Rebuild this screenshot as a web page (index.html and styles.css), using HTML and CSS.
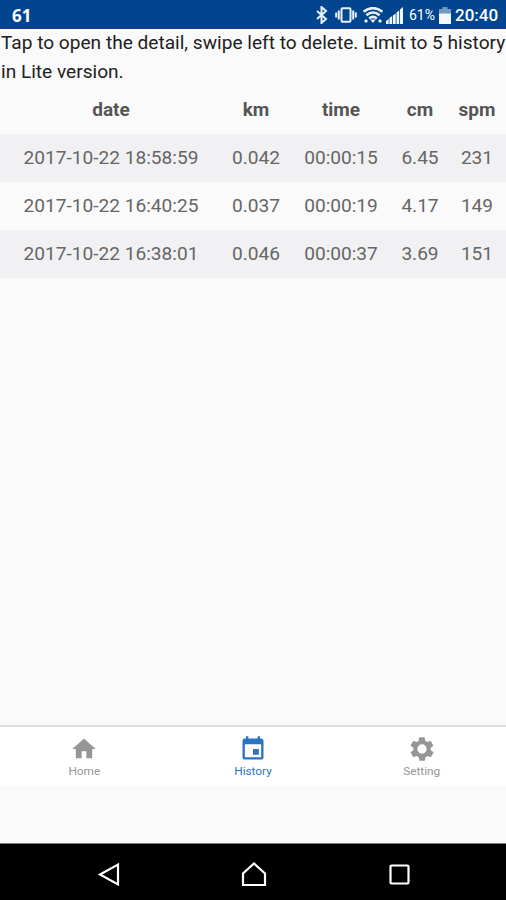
FILE: index.html
```html
<!DOCTYPE html>
<html lang="en">
    <head>
        <title>History</title>
        <meta charset="UTF-8" />
        <meta name="viewport" content="width=device-width, initial-scale=1" />
        <link rel="stylesheet" href="styles.css">
    </head>
    <body>
        <header class="status">
            <span class="notice">61</span>
            <div class="status-icons">
                <svg class="bluetooth" width="12" height="18" viewBox="0 0 12 18">
                    <path d="M1 5l9 8-4.5 4V1L10 5l-9 8" />
                </svg>
                <svg class="vibrate" width="22" height="16" viewBox="0 0 22 16">
                    <rect x="6.5" y="1.2" width="9" height="13.6" rx="1" />
                    <path d="M3.8 3.5v9M18.2 3.5v9M1.2 5.5v5M20.8 5.5v5" />
                </svg>
                <svg class="wifi" width="20" height="17" viewBox="0 0 20 17">
                    <path d="M.6 4.7Q10-2.4 19.4 4.7M3.4 8.2q6.6-5.4 13.2 0M6.2 11.4q3.800-3 7.600 0" />
                    <path class="solid" d="M7.2 12.5h5.600L10 16zM1 14l2-2 2 2-2 2zM15 14l2-2 2 2-2 2z" />
                </svg>
                <svg class="signal" width="17" height="17" viewBox="0 0 17 17">
                    <path class="solid" d="M0 17v-3l2.7-2v5zM3.4 17v-6l2.8-2v8zM7 17V8.5l2.7-2V17zM10.5 17V5.500l2.700-2V17zM14 17V2.400L17 0v17z" />
                </svg>
                <span class="percent">61%</span>
                <svg class="battery" width="12" height="17" viewBox="0 0 12 17">
                    <path class="drained" d="M3.5 0h5v2H12v5H0V2h3.5z" />
                    <path class="solid" d="M0 6.5h12V17H0z" />
                </svg>
                <span class="clock">20:40</span>
            </div>
        </header>
        <main class="content">
            <p class="hint">Tap to open the detail, swipe left to delete. Limit to 5 history<br>in Lite version.</p>
            <table class="history">
                <colgroup>
                    <col class="col-date">
                    <col class="col-km">
                    <col class="col-time">
                    <col class="col-cm">
                    <col class="col-spm">
                </colgroup>
                <thead>
                    <tr><th>date</th><th>km</th><th>time</th><th>cm</th><th>spm</th></tr>
                </thead>
                <tbody>
                    <tr><td>2017-10-22 18:58:59</td><td>0.042</td><td>00:00:15</td><td>6.45</td><td>231</td></tr>
                    <tr><td>2017-10-22 16:40:25</td><td>0.037</td><td>00:00:19</td><td>4.17</td><td>149</td></tr>
                    <tr><td>2017-10-22 16:38:01</td><td>0.046</td><td>00:00:37</td><td>3.69</td><td>151</td></tr>
                </tbody>
            </table>
        </main>
        <nav class="tabs">
            <a class="tab">
                <svg width="28" height="28" viewBox="0 0 24 24">
                    <path d="M10 20v-6h4v6h5v-8h3L12 3 2 12h3v8z" />
                </svg>
                <span>Home</span>
            </a>
            <a class="tab active">
                <svg width="28" height="28" viewBox="0 0 24 24">
                    <path d="M17 12h-5v5h5v-5zM16 1v2H8V1H6v2H5c-1.1 0-2 .9-2 2v14c0 1.1.9 2 2 2h14c1.1 0 2-.9 2-2V5c0-1.1-.9-2-2-2h-1V1h-2zm3 18H5V8h14v11z" />
                </svg>
                <span>History</span>
            </a>
            <a class="tab">
                <svg width="28" height="28" viewBox="0 0 24 24">
                    <path d="M19.4 13c0-.3.1-.6.1-1s0-.7-.1-1l2.1-1.6c.2-.2.2-.4.1-.6l-2-3.5c-.1-.2-.4-.3-.6-.2l-2.5 1c-.5-.4-1.1-.7-1.7-1l-.4-2.6c0-.3-.2-.5-.4-.5h-4c-.2 0-.4.2-.5.4l-.4 2.7c-.6.2-1.1.6-1.7 1l-2.5-1c-.2-.1-.4 0-.6.2l-2 3.500c-.1.2 0 .5.1.6L4.600 11c0 .3-.1.6-.1 1s0 .7.1 1l-2.1 1.6c-.2.2-.3.4-.1.6l2 3.500c.1.2.4.3.6.2l2.500-1c.5.4 1.1.7 1.7 1l.4 2.600c.1.3.3.5.5.5h4c.2 0 .5-.2.5-.4l.4-2.700c.6-.2 1.1-.6 1.7-1l2.500 1c.2.1.5 0 .6-.2l2-3.500c.1-.2.1-.5-.1-.6zM12 16a4 4 0 1 1 0-8 4 4 0 0 1 0 8z" />
                </svg>
                <span>Setting</span>
            </a>
        </nav>
        <footer class="navbar">
            <svg width="24" height="26" viewBox="0 0 24 26">
                <path d="M21 2.500v20L3 12.500z" />
            </svg>
            <svg width="26" height="26" viewBox="0 0 26 26">
                <path d="M13 1.500l11 10V23H2V11.500z" />
            </svg>
            <svg width="24" height="26" viewBox="0 0 24 26">
                <rect x="3.500" y="3.500" width="18" height="18" rx="1" />
            </svg>
        </footer>
    </body>
</html>
```

FILE: styles.css
```css
* {
    box-sizing: border-box;
}
body {
    display: flex;
    flex-direction: column;
    height: 100vh;
    margin: 0;
    overflow: hidden;
    background-color: #fafafa;
    font-family: Roboto, "Liberation Sans", sans-serif;
}
.status {
    display: flex;
    align-items: center;
    justify-content: space-between;
    height: 29px;
    padding: 2px 8px 0 12px;
    background-color: #01458f;
    border-bottom: 1px solid #1a2f97;
    color: #fff;
}
.notice {
    font-family: "Noto Sans", sans-serif;
    font-size: 17px;
    font-weight: 700;
}
.status-icons {
    display: flex;
    align-items: center;
}
.status svg {
    fill: none;
    stroke: #e8f1fb;
    stroke-width: 2;
}
.status .wifi {
    margin-left: 6px;
    stroke-width: 2.6;
}
.status .solid {
    fill: #f2f7fd;
    stroke: none;
}
.status .drained {
    fill: #6f9ac4;
    stroke: none;
}
.vibrate {
    margin-left: 7px;
}
.signal {
    margin-left: 3px;
}
.percent {
    width: 27px;
    margin-left: 6px;
    font-size: 14px;
}
.battery {
    margin-left: 3px;
}
.clock {
    width: 43px;
    margin-left: 4px;
    font-size: 17px;
    font-weight: 500;
}
.content {
    flex: 1;
}
.hint {
    margin: 0;
    padding-left: 1px;
    color: #212121;
    font-size: 19.1px;
    line-height: 28.5px;
    white-space: nowrap;
}
.history {
    width: 506px;
    border-collapse: collapse;
    table-layout: fixed;
    color: #666;
    font-size: 19.1px;
    text-align: center;
}
.history th,
.history td {
    height: 48px;
    padding: 0 0 2px;
    white-space: nowrap;
}
.history th {
    color: #555;
    font-size: 19px;
    font-weight: 700;
}
.history tbody tr:nth-child(odd) {
    background-color: #f1f1f3;
}
.col-date {
    width: 222px;
}
.col-km {
    width: 68px;
}
.col-time {
    width: 102px;
}
.col-cm {
    width: 56px;
}
.col-spm {
    width: 58px;
}
.tabs {
    display: flex;
    height: 60px;
    margin-bottom: 58px;
    background-color: #fff;
    border-top: 2px solid #dedede;
}
.tab {
    display: flex;
    flex: 1;
    flex-direction: column;
    align-items: center;
    padding-top: 8px;
    color: #969696;
    font-size: 11.8px;
    line-height: 16px;
}
.tab svg {
    fill: currentColor;
}
.active {
    color: #2a73c5;
}
.navbar {
    display: flex;
    align-items: center;
    justify-content: space-between;
    height: 57px;
    padding: 5px 95px 0 97px;
    background-color: #000;
    border-top: 1px solid #777;
}
.navbar svg {
    fill: none;
    stroke: #fff;
    stroke-width: 2.2;
}
```
